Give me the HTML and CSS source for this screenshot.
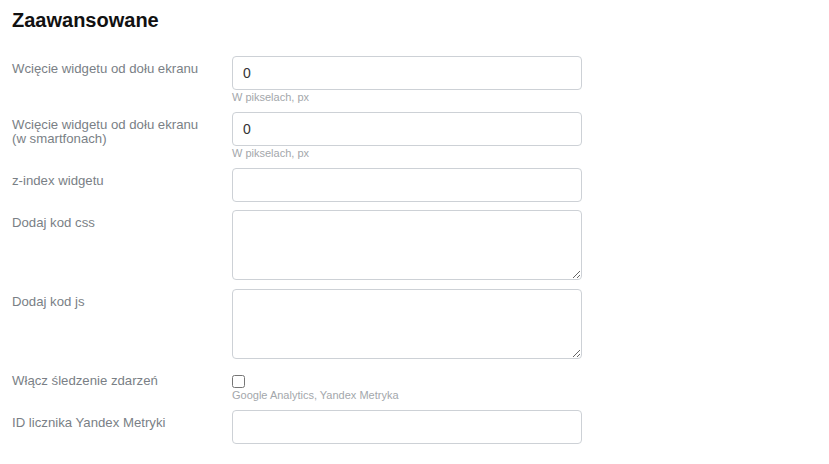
FILE: index.html
```html
<!DOCTYPE html>
<html lang="pl">
<head>
<meta charset="utf-8">
<title>Zaawansowane</title>
<link rel="stylesheet" href="styles.css">
</head>
<body>
<div class="panel">
  <h2 class="title">Zaawansowane</h2>
  <div class="form">
    <div class="row">
      <label class="label">Wcięcie widgetu od dołu ekranu</label>
      <div class="field">
        <input class="input" type="text" value="0">
        <div class="hint">W pikselach, px</div>
      </div>
    </div>
    <div class="row">
      <label class="label">Wcięcie widgetu od dołu ekranu (w smartfonach)</label>
      <div class="field">
        <input class="input" type="text" value="0">
        <div class="hint">W pikselach, px</div>
      </div>
    </div>
    <div class="row">
      <label class="label">z-index widgetu</label>
      <div class="field">
        <input class="input" type="text" value="">
      </div>
    </div>
    <div class="row">
      <label class="label">Dodaj kod css</label>
      <div class="field">
        <textarea class="area"></textarea>
      </div>
    </div>
    <div class="row">
      <label class="label">Dodaj kod js</label>
      <div class="field">
        <textarea class="area"></textarea>
      </div>
    </div>
    <div class="row row-check">
      <label class="label">Włącz śledzenie zdarzeń</label>
      <div class="field">
        <input class="check" type="checkbox">
        <div class="hint hint-check">Google Analytics, Yandex Metryka</div>
      </div>
    </div>
    <div class="row">
      <label class="label">ID licznika Yandex Metryki</label>
      <div class="field">
        <input class="input" type="text" value="">
      </div>
    </div>
  </div>
</div>
</body>
</html>
```

FILE: styles.css
```css
html, body {
  margin: 0;
  padding: 0;
  background: #ffffff;
}

body {
  font-family: "Liberation Sans", Arial, sans-serif;
}

.panel {
  padding: 9px 12px 0 12px;
}

.title {
  margin: 0;
  font-size: 20px;
  line-height: 23px;
  font-weight: bold;
  color: #111111;
}

.form {
  margin-top: 24px;
  display: flex;
  flex-direction: column;
  gap: 8px;
}

.row {
  display: flex;
  align-items: flex-start;
}

.label {
  width: 220px;
  flex: none;
  padding-top: 6px;
  padding-right: 20px;
  font-size: 13.2px;
  line-height: 14px;
  color: #7a7f86;
  box-sizing: border-box;
}

.field {
  width: 350px;
  display: flex;
  flex-direction: column;
  align-items: flex-start;
}

.input {
  box-sizing: border-box;
  width: 350px;
  height: 34px;
  margin: 0;
  padding: 0 10px;
  border: 1px solid #cdd1d6;
  border-radius: 4px;
  font-family: "Liberation Sans", Arial, sans-serif;
  font-size: 14px;
  color: #333333;
  background: #ffffff;
  outline: none;
}

.area {
  display: block;
  box-sizing: border-box;
  width: 350px;
  height: 70px;
  margin: 0 0 1px 0;
  padding: 6px 10px;
  border: 1px solid #cdd1d6;
  border-radius: 4px;
  font-family: "Liberation Sans", Arial, sans-serif;
  font-size: 14px;
  color: #333333;
  background: #ffffff;
  outline: none;
}

.hint {
  font-size: 11px;
  line-height: 13px;
  color: #a3a7ab;
  margin-top: 1px;
}

.check {
  width: 13px;
  height: 13px;
  margin: 7px 0 0 0;
}

.hint-check {
  margin-top: 0;
  line-height: 14px;
}
```
